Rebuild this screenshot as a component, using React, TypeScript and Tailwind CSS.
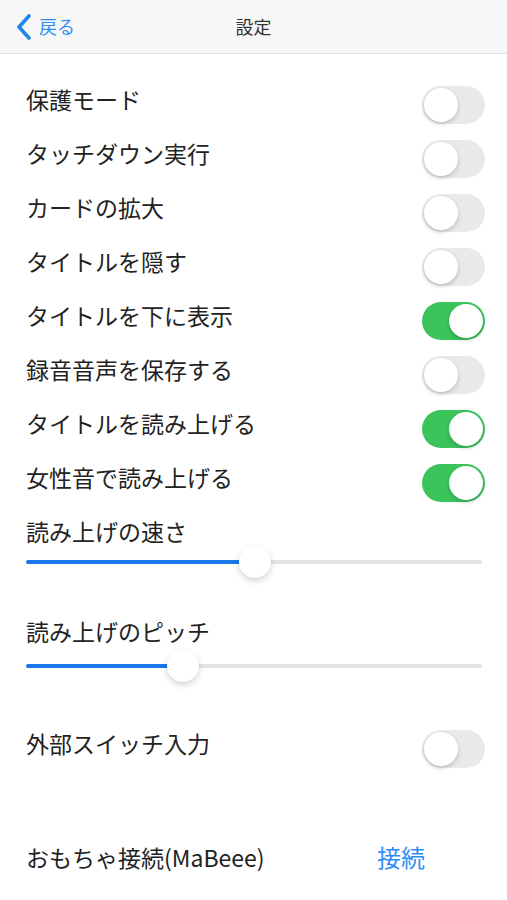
import React from "react";

const font = { fontFamily: '"Noto Sans CJK JP", "Noto Sans", sans-serif' };

function Toggle({ on }: { on?: boolean }) {
  return (
    <div
      className={`relative mt-[7px] w-[63px] h-[38px] rounded-full ${on ? "bg-[#3ac45b]" : "bg-[#e9e9eb]"}`}
    >
      <div
        className={`absolute top-[2px] w-[34px] h-[34px] rounded-full bg-white shadow-[0_2px_4px_rgba(0,0,0,0.2)] ${on ? "right-[2px]" : "left-[2px]"}`}
      />
    </div>
  );
}

function Row({ label, on, className = "" }: { label: string; on?: boolean; className?: string }) {
  return (
    <div className={`flex items-center justify-between h-[54px] pl-[26px] pr-[22px] ${className}`}>
      <span className="text-[23px] text-[#222] -mt-[4px]">{label}</span>
      <Toggle on={on} />
    </div>
  );
}

function Slider({
  label,
  value,
  trackGap,
  className = "",
}: {
  label: string;
  value: number;
  trackGap: string;
  className?: string;
}) {
  return (
    <div className={`px-[26px] ${className}`}>
      <div className="text-[23px] leading-[28px] text-[#222]">{label}</div>
      <div className={`relative h-[28px] mr-[-1px] ${trackGap}`}>
        <div className="absolute left-0 right-0 top-[12px] h-[4px] rounded-full bg-[#e4e4e6]" />
        <div
          className="absolute left-0 top-[12px] h-[4px] rounded-full bg-[#1a78e6]"
          style={{ width: `${value}%` }}
        />
        <div
          className="absolute top-[-2px] w-[32px] h-[32px] -ml-[16px] rounded-full bg-white shadow-[0_3px_6px_rgba(0,0,0,0.18)]"
          style={{ left: `${value}%` }}
        />
      </div>
    </div>
  );
}

export default function App() {
  return (
    <div className="w-[507px] h-[900px] bg-white overflow-hidden" style={font}>
      <div className="relative flex items-center justify-center h-[54px] bg-[#f7f7f7] border-b border-[#e2e2e2]">
        <div className="absolute left-[15px] top-0 h-full flex items-center gap-[6px] text-[#2f8ef5]">
          <svg width="18" height="26" viewBox="0 0 18 26">
            <path d="M14 2 L4 13 L14 24" fill="none" stroke="#1f86f2" strokeWidth="3.6" strokeLinecap="round" strokeLinejoin="round" />
          </svg>
          <span className="text-[18px]">戻る</span>
        </div>
        <span className="text-[18px] text-[#333]">設定</span>
      </div>

      <div className="pt-[20px]">
        <Row label="保護モード" />
        <Row label="タッチダウン実行" />
        <Row label="カードの拡大" />
        <Row label="タイトルを隠す" />
        <Row label="タイトルを下に表示" on />
        <Row label="録音音声を保存する" />
        <Row label="タイトルを読み上げる" on />
        <Row label="女性音で読み上げる" on />
      </div>

      <Slider label="読み上げの速さ" value={50.2} trackGap="mt-[3px]" className="mt-[11px]" />
      <Slider label="読み上げのピッチ" value={34.5} trackGap="mt-[7px]" className="mt-[41px]" />

      <Row label="外部スイッチ入力" className="mt-[38px]" />

      <div className="flex items-center h-[54px] pl-[26px] mt-[58px]">
        <span className="text-[23px] text-[#222] w-[351px]">おもちゃ接続(MaBeee)</span>
        <span className="text-[24px] text-[#2f8ef5]">接続</span>
      </div>
    </div>
  );
}
